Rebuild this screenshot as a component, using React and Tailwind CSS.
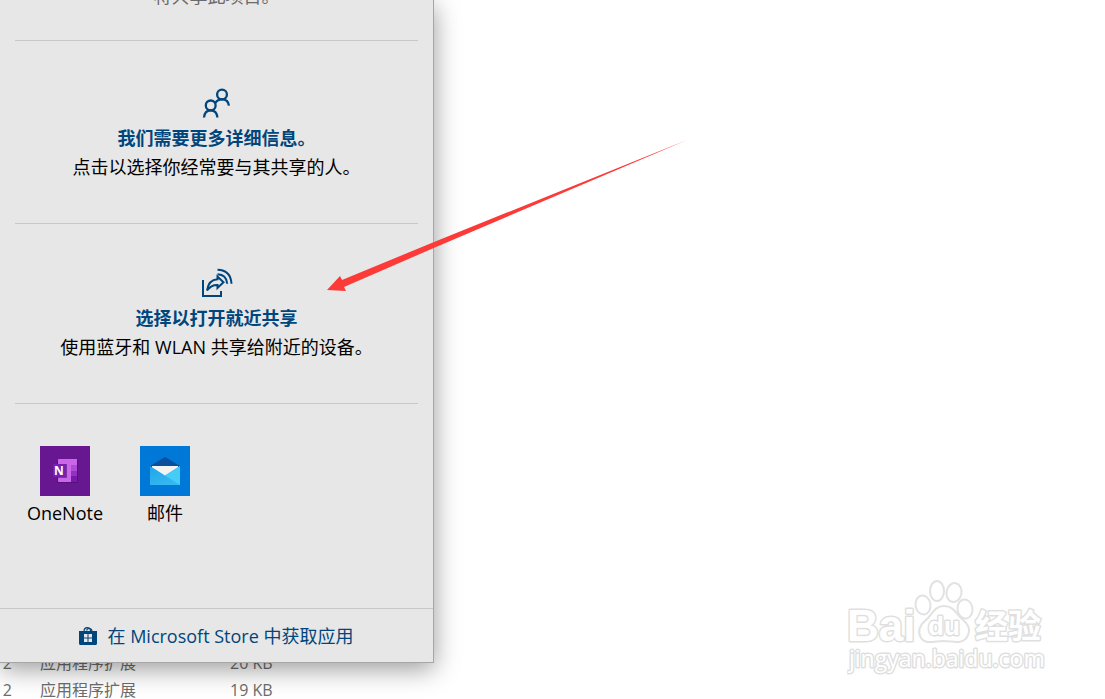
import React from 'react';

const files = [
  { id: 1, date: '12', type: '应用程序扩展', size: '20 KB' },
  { id: 2, date: '12', type: '应用程序扩展', size: '19 KB' },
];

const PeopleIcon = () => (
  <svg width="30" height="30" viewBox="0 0 30 30" fill="none" stroke="#00457c" strokeWidth="2.3" aria-hidden="true">
    <circle cx="20" cy="6.5" r="4.9" />
    <circle cx="8.7" cy="17.4" r="4.9" />
    <path d="M2 29.5C2.4 25 5 22.3 8.7 22.3S15 25 15.4 29.5" />
    <path d="M13.3 15C14.8 12.6 17 11.4 20 11.4C23.9 11.4 26.5 14 26.9 17.6" />
  </svg>
);

const NearbyIcon = () => (
  <svg width="32" height="30" viewBox="0 0 32 30" fill="none" stroke="#00457c" strokeWidth="2" aria-hidden="true">
    <path d="M2 12V28H20V23" />
    <path d="M6 22.5C7 15.5 11 11.5 16.5 11.2V8.5L22.5 14.2L16.5 20V17C12 16.8 9 18.5 6 22.5Z" />
    <path d="M16.5 6.3C22.3 6.6 25.8 10 26.2 15.8" />
    <path d="M16.5 1.8C25 2 30 7 30.5 15.8" />
  </svg>
);

const OneNoteIcon = () => (
  <svg width="50" height="50" viewBox="0 0 50 50" aria-hidden="true">
    <rect width="50" height="50" fill="#67178f" />
    <rect x="17" y="14" width="21" height="23" rx="1" fill="#531276" />
    <path d="M18 14C18 13.4 18.4 13 19 13H37V36H19C18.4 36 18 35.6 18 35Z" fill="#cb66ea" />
    <rect x="31" y="19" width="6" height="6" fill="#ae4bd5" />
    <rect x="31" y="25" width="6" height="5" fill="#9332bf" />
    <rect x="31" y="30" width="6" height="6" fill="#7719aa" />
    <rect x="18" y="18" width="9" height="14" fill="#4d126c" opacity="0.6" />
    <rect x="13" y="18" width="13" height="13" rx="1" fill="#7a1eb0" />
    <text x="19" y="29" textAnchor="middle" fontFamily="Open Sans, sans-serif" fontSize="12" fontWeight="700" fill="#fff">N</text>
  </svg>
);

const MailIcon = () => (
  <svg width="50" height="50" viewBox="0 0 50 50" aria-hidden="true">
    <defs>
      <linearGradient id="envelope" x1="0" y1="0" x2="0.6" y2="1">
        <stop offset="0" stopColor="#1fa4e8" />
        <stop offset="1" stopColor="#35b8f1" />
      </linearGradient>
    </defs>
    <rect width="50" height="50" fill="#0078d7" />
    <path d="M10 20L25 11L40 20L37 24H13Z" fill="#0a4f9e" />
    <path d="M12 20H38V22L25 31L12 22Z" fill="#f3f3f3" />
    <path d="M10 20L25 29.5L40 20V39H10Z" fill="url(#envelope)" />
    <path d="M25 29.5L40 20V39Z" fill="#45cdf7" />
  </svg>
);

const StoreIcon = () => (
  <svg width="18" height="18" viewBox="0 0 18 18" aria-hidden="true">
    <path d="M5 4.5C5 -0.6 11.5 -0.6 11.5 4.5M7.5 3.5C8.3 0.6 13 0.8 13 4.5" fill="none" stroke="#00457c" strokeWidth="1.2" />
    <path d="M0 4H18V16.5C18 17.4 17.4 18 16.5 18H1.5C.6 18 0 17.4 0 16.5Z" fill="#00457c" />
    <path d="M5 7H8.5V10.5H5ZM9.5 7H13V10.5H9.5ZM5 11.5H8.5V15H5ZM9.5 11.5H13V15H9.5Z" fill="#e7e7e7" />
  </svg>
);

const apps = [
  { name: 'OneNote', icon: OneNoteIcon },
  { name: '邮件', icon: MailIcon },
];

const Watermark = () => (
  <svg className="absolute right-[58px] bottom-[20px]" width="200" height="102" viewBox="0 0 200 102" aria-label="Baidu 经验">
    <g fill="#fff" stroke="#e2e2e2" strokeWidth="2">
      <ellipse cx="76" cy="28" rx="7.5" ry="9.5" transform="rotate(-8 76 28)" />
      <ellipse cx="90" cy="14" rx="7" ry="10" />
      <ellipse cx="107" cy="15.5" rx="7.5" ry="9.5" transform="rotate(10 107 15.5)" />
      <ellipse cx="118" cy="32" rx="7.5" ry="9.5" transform="rotate(-8 118 32)" />
      <path d="M97 29C107 29 109 37 115 42C122 48 124 53 120 60C115 68 106 64 97 64C88 64 79 68 74 61C70 54 73 48 79 43C85 38 87 29 97 29Z" />
    </g>
    <g fill="#fff" stroke="#dfdfdf" strokeWidth="3" strokeLinejoin="round" paintOrder="stroke" fontWeight="700">
      <text x="0" y="64" fontFamily="Liberation Sans, sans-serif" fontSize="44">Bai</text>
      <text x="81" y="58" fontFamily="Liberation Sans, sans-serif" fontSize="26">du</text>
      <text x="128" y="61" fontFamily="Noto Sans CJK SC, sans-serif" fontSize="33">经验</text>
      <text x="2" y="90" fontFamily="Open Sans, sans-serif" fontSize="23" fontWeight="400">jingyan.baidu.com</text>
    </g>
  </svg>
);

const ShareOption = ({ icon: Icon, title, text, className }) => (
  <button className={`flex w-full flex-col items-center border-b border-[#c6c7c7] ${className}`}>
    <Icon />
    <span className="mt-1.5 leading-7 font-bold text-[#00457c]">{title}</span>
    <span className="leading-[30px]">{text}</span>
  </button>
);

const SharePanel = () => (
  <section className="absolute top-0 left-0 w-[434px] max-w-full overflow-hidden border-r border-b border-[#a6a6a6] bg-[#e7e7e7] text-[18px] text-black shadow-[0_6px_24px_rgba(0,0,0,0.4)]">
    <div className="-mt-4 px-[15px]">
      <p className="border-b border-[#c6c7c7] pb-8 leading-6 text-center text-[#6b6b6b]">将共享此项目。</p>
      <ShareOption icon={PeopleIcon} title="我们需要更多详细信息。" text="点击以选择你经常要与其共享的人。" className="pt-[47px] pb-[41px]" />
      <ShareOption icon={NearbyIcon} title="选择以打开就近共享" text="使用蓝牙和 WLAN 共享给附近的设备。" className="pt-[44px] pb-[41px]" />
      <div className="flex pt-[42px] pb-20">
        {apps.map((app) => (
          <button key={app.name} className="flex w-[100px] flex-col items-center">
            <app.icon />
            <span className="mt-0.5 leading-[30px]">{app.name}</span>
          </button>
        ))}
      </div>
    </div>
    <a href="#store" className="flex h-[54px] items-center justify-center gap-[10px] border-t border-[#c6c7c7] text-[#00457c]">
      <StoreIcon />
      <span className="pt-0.5">在 Microsoft Store 中获取应用</span>
    </a>
  </section>
);

const App = () => (
  <main className="relative flex min-h-screen flex-col justify-end overflow-hidden bg-white font-['Open_Sans','Noto_Sans_CJK_SC',sans-serif]">
    <table className="w-[300px] table-fixed text-[16px] leading-[18px] text-[#6d6d6d]">
      <tbody>
        {files.map((file) => (
          <tr key={file.id} className="h-[27px] align-bottom">
            <td className="w-10 p-0">
              <span className="flex w-3 justify-end">{file.date}</span>
            </td>
            <td className="w-[190px] p-0">{file.type}</td>
            <td className="p-0">{file.size}</td>
          </tr>
        ))}
      </tbody>
    </table>

    <SharePanel />
    <Watermark />

    {/* Pointer to the nearby sharing option */}
    <svg className="pointer-events-none absolute top-[138px] left-[326px]" width="364" height="156" viewBox="0 0 364 156" aria-hidden="true">
      <path d="M1 152L14 138L16 142L108 104L361 2L110 109L18 149L20 153Z" fill="#fc3a38" />
    </svg>
  </main>
);

export default App;
